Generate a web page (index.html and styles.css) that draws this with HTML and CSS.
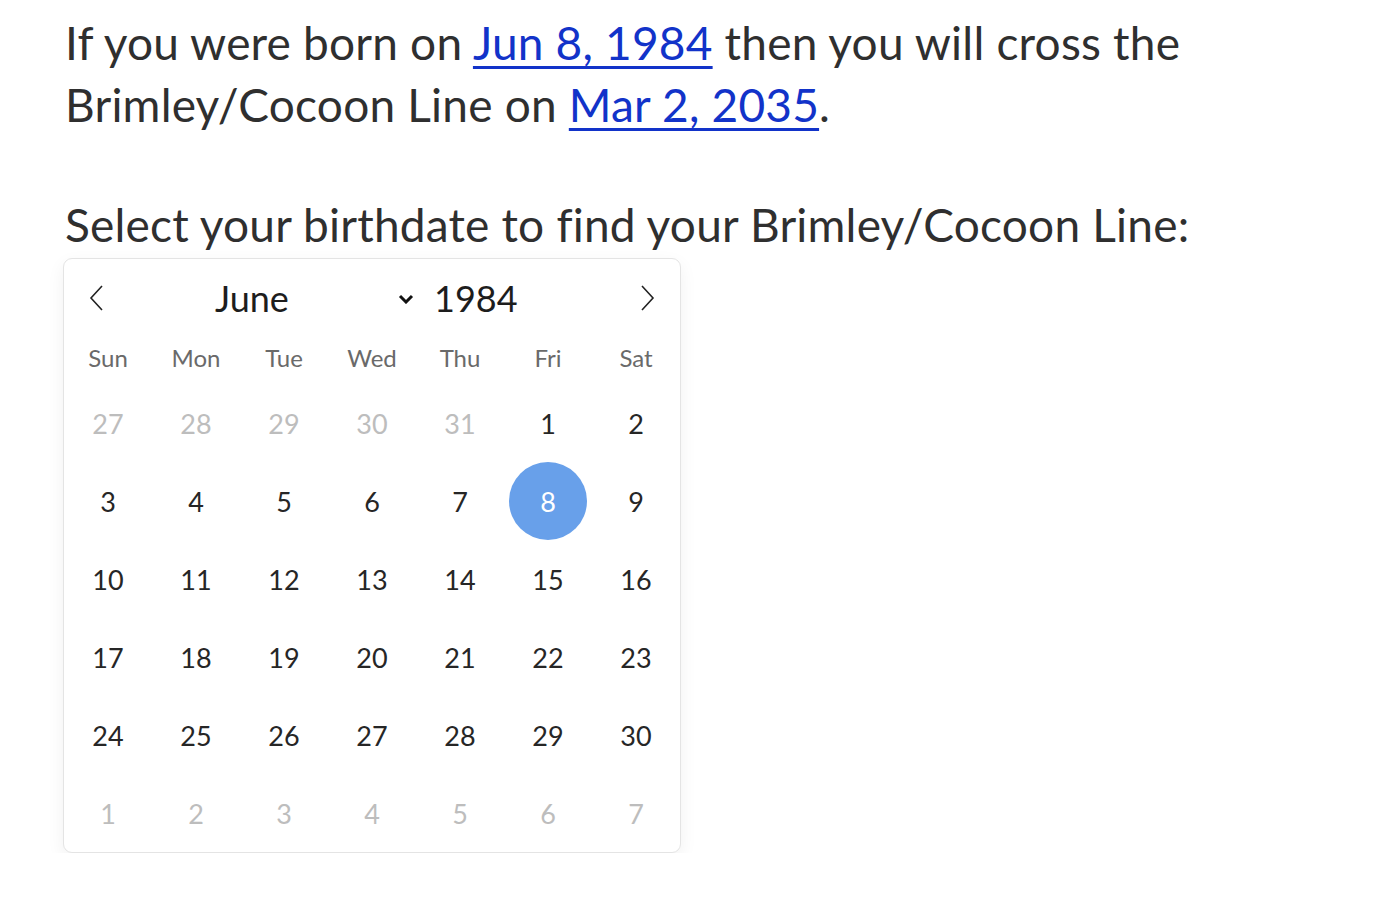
FILE: index.html
```html
<!DOCTYPE html>
<html lang="en">
<head>
<meta charset="utf-8">
<title>Brimley/Cocoon Line</title>
<link rel="stylesheet" href="styles.css">
</head>
<body>
<main class="page">
  <p class="lead"><span>If you were born on</span> <a href="#">Jun 8, 1984</a> <span>then you will cross the</span> <span>Brimley/Cocoon Line on</span> <a href="#">Mar 2, 2035</a>.</p>
  <p class="prompt">Select your birthdate to find your Brimley/Cocoon Line:</p>
  <div class="calendar">
    <div class="cal-header">
      <button class="nav prev" aria-label="Previous month">
        <svg width="16" height="26" viewBox="0 0 16 26"><path d="M13 1 L2 13 L13 25" fill="none" stroke="#222" stroke-width="1.6"/></svg>
      </button>
      <div class="month-select">
        <span class="month">June</span>
        <svg class="chev" width="16" height="10" viewBox="0 0 16 10"><path d="M2 2 L8 8 L14 2" fill="none" stroke="#111" stroke-width="3"/></svg>
      </div>
      <span class="year">1984</span>
      <button class="nav next" aria-label="Next month">
        <svg width="16" height="26" viewBox="0 0 16 26"><path d="M3 1 L14 13 L3 25" fill="none" stroke="#222" stroke-width="1.6"/></svg>
      </button>
    </div>
    <div class="weekdays">
      <span>Sun</span><span>Mon</span><span>Tue</span><span>Wed</span><span>Thu</span><span>Fri</span><span>Sat</span>
    </div>
    <div class="days">
      <span class="day muted">27</span><span class="day muted">28</span><span class="day muted">29</span><span class="day muted">30</span><span class="day muted">31</span><span class="day">1</span><span class="day">2</span>
      <span class="day">3</span><span class="day">4</span><span class="day">5</span><span class="day">6</span><span class="day">7</span><span class="day selected"><span class="dot">8</span></span><span class="day">9</span>
      <span class="day">10</span><span class="day">11</span><span class="day">12</span><span class="day">13</span><span class="day">14</span><span class="day">15</span><span class="day">16</span>
      <span class="day">17</span><span class="day">18</span><span class="day">19</span><span class="day">20</span><span class="day">21</span><span class="day">22</span><span class="day">23</span>
      <span class="day">24</span><span class="day">25</span><span class="day">26</span><span class="day">27</span><span class="day">28</span><span class="day">29</span><span class="day">30</span>
      <span class="day muted">1</span><span class="day muted">2</span><span class="day muted">3</span><span class="day muted">4</span><span class="day muted">5</span><span class="day muted">6</span><span class="day muted">7</span>
    </div>
  </div>
</main>
</body>
</html>
```

FILE: styles.css
```css
html, body {
  margin: 0;
  padding: 0;
  background: #fff;
}

body {
  font-family: Lato, "Noto Sans", sans-serif;
  color: #2f2f2f;
}

.page {
  padding: 12px 0 0 65px;
  width: 1220px;
}

.lead,
.prompt {
  margin: 0;
  font-size: 46px;
  line-height: 62px;
  letter-spacing: 0.2px;
}

.lead {
  margin-bottom: 58px;
}

.prompt {
  margin-bottom: 2px;
}

.lead a {
  color: #1233c9;
  text-decoration: underline;
  text-decoration-thickness: 3px;
  text-underline-offset: 6px;
}

.calendar {
  width: 616px;
  border: 1px solid #e4e4e4;
  border-radius: 9px;
  box-shadow: 0 6px 18px rgba(0, 0, 0, 0.06);
  background: #fff;
  margin-left: -2px;
}

.cal-header {
  display: flex;
  align-items: center;
  height: 69px;
  padding-top: 4px;
}

.nav {
  border: 0;
  background: none;
  padding: 0;
  display: flex;
  align-items: center;
  justify-content: center;
  cursor: pointer;
}

.prev {
  width: 66px;
  height: 40px;
}

.month-select {
  width: 290px;
  display: flex;
  align-items: center;
  justify-content: space-between;
  padding-left: 85px;
  box-sizing: border-box;
  padding-right: 6px;
}

.month,
.year {
  font-size: 36px;
  color: #1d1d1d;
}

.chev {
  margin-top: 2px;
}

.year {
  margin-left: 14px;
}

.next {
  margin-left: auto;
  width: 66px;
  height: 40px;
}

.weekdays {
  display: grid;
  grid-template-columns: repeat(7, 88px);
  height: 50px;
  align-items: center;
  font-size: 24px;
  color: #6a6a6a;
  margin-bottom: 2px;
}

.weekdays span {
  text-align: center;
}

.days {
  display: grid;
  grid-template-columns: repeat(7, 88px);
  grid-auto-rows: 78px;
  font-size: 27px;
  color: #262626;
}

.day {
  display: flex;
  align-items: center;
  justify-content: center;
}

.muted {
  color: #bdbdbd;
}

.dot {
  width: 78px;
  height: 78px;
  border-radius: 50%;
  background: #68a0ea;
  color: #fff;
  display: flex;
  align-items: center;
  justify-content: center;
}
```
